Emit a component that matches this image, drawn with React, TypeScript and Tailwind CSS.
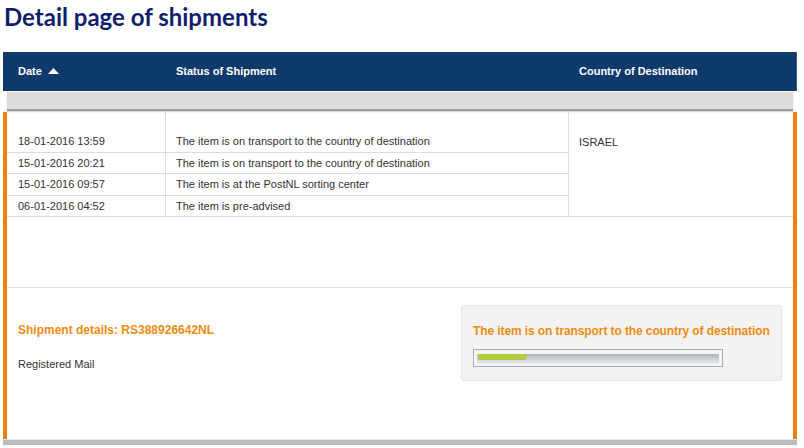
const events = [
  { date: '18-01-2016 13:59', status: 'The item is on transport to the country of destination', h: 'h-[22px]' },
  { date: '15-01-2016 20:21', status: 'The item is on transport to the country of destination', h: 'h-[21px]' },
  { date: '15-01-2016 09:57', status: 'The item is at the PostNL sorting center', h: 'h-[22px]' },
  { date: '06-01-2016 04:52', status: 'The item is pre-advised', h: 'h-[20px]' },
];

function SortUp() {
  return (
    <svg width="11" height="6" viewBox="0 0 11 6" className="ml-[6px] mt-[-2px]">
      <path d="M0 6 L5.5 0 L11 6 Z" fill="#ffffff" />
    </svg>
  );
}

function ProgressBar({ value }: { value: number }) {
  return (
    <div className="w-[250px] h-[18px] border border-[#a7adb3] bg-[#f4f5f6] p-[3px]">
      <div className="h-[10px] bg-gradient-to-b from-[#aeb1b5] via-[#cfd1d4] to-[#eceded]">
        <div className="h-[6px] bg-[#b4cc3d] ml-[1px] mt-[1px]" style={{ width: `${value}%` }} />
      </div>
    </div>
  );
}

export default function App() {
  return (
    <div className="w-[804px] h-[448px] bg-white overflow-hidden font-['Liberation_Sans',Arial,sans-serif] text-[11px] text-[#333]">
      <h1 className="h-[52px] pl-[4px] pt-[2px] font-['Lato',sans-serif] text-[24px] leading-[30px] font-bold text-[#0f1f6e]">
        Detail page of shipments
      </h1>

      <div className="ml-[3px] mr-[7px]">
        {/* table head */}
        <div className="flex items-center h-[39px] bg-[#0d3a6b] border-r border-[#3d5f86] text-white font-bold text-[11px]">
          <div className="w-[163px] pl-[15px] flex items-center">
            Date
            <SortUp />
          </div>
          <div className="w-[402px] pl-[10px]">Status of Shipment</div>
          <div className="pl-[11px]">Country of Destination</div>
        </div>

        <div className="px-[4px] bg-white">
          <div className="h-[20px] bg-[#dcdcdc] border-t border-white border-b-2 border-b-[#9d9d9d] shadow-[0_1px_1px_#d6d6d6]" />
        </div>

        {/* body */}
        <div className="h-[327px] mt-px border-x-4 border-[#ef800c] flex flex-col">
          <div className="flex border-b border-[#dedede]">
            <div className="w-[562px] border-r border-[#dedede]">
              <div className="flex h-[19px]">
                <div className="w-[159px] border-r border-[#dedede]" />
              </div>
              {events.map((e, i) => (
                <div
                  key={i}
                  className={`flex ${e.h} ${i < events.length - 1 ? 'border-b border-[#dedede]' : ''}`}
                >
                  <div className="w-[159px] pl-[11px] border-r border-[#dedede] flex items-center">{e.date}</div>
                  <div className="pl-[10px] flex items-center">{e.status}</div>
                </div>
              ))}
            </div>
            <div className="pl-[10px] pt-[24px] leading-[13px]">ISRAEL</div>
          </div>

          <div className="h-[71px] border-b border-[#e0e0e0]" />

          <div className="flex flex-1 justify-between">
            <div className="pl-[11px] pt-[35px]">
              <div className="text-[12px] leading-[14px] font-bold text-[#f08c12]">Shipment details: RS388926642NL</div>
              <div className="mt-[20px] leading-[14px]">Registered Mail</div>
            </div>
            <div className="mt-[17px] mr-[11px] w-[321px] h-[76px] bg-[#f3f3f3] border border-[#e6e6e6] rounded-[3px] pl-[11px] pt-[18px]">
              <div className="text-[12px] leading-[14px] font-bold text-[#f08c12] tracking-[-0.1px]">
                The item is on transport to the country of destination
              </div>
              <div className="mt-[11px]">
                <ProgressBar value={20} />
              </div>
            </div>
          </div>
        </div>

        <div className="h-[6px] bg-[#bcbcbc] border-t border-[#e8e8e8]" />
      </div>
    </div>
  );
}
